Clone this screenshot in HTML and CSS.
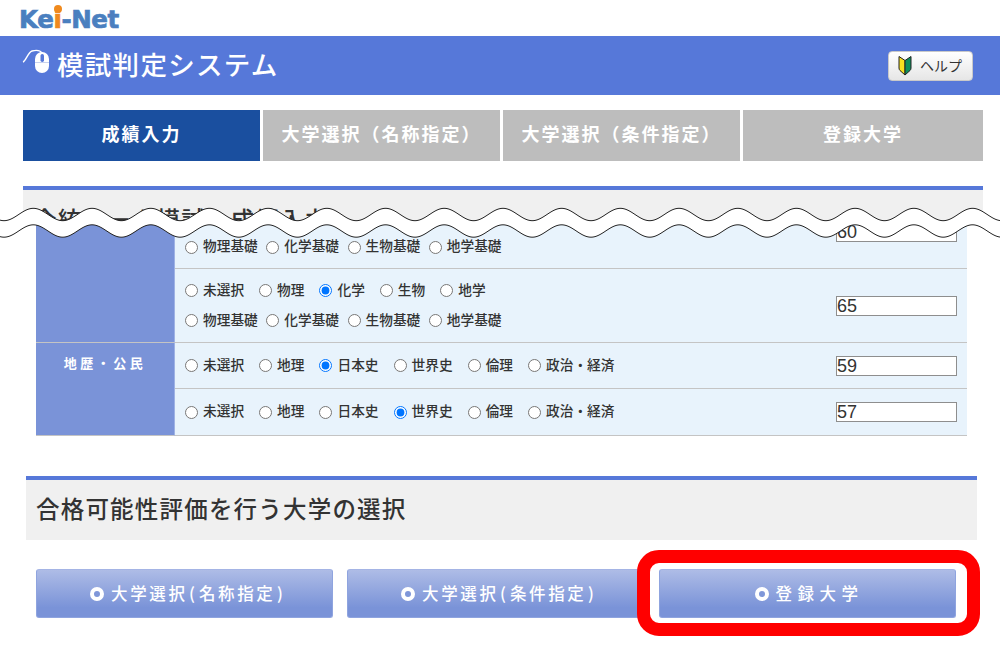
FILE: index.html
```html
<!DOCTYPE html>
<html lang="ja">
<head>
<meta charset="utf-8">
<title>模試判定システム</title>
<link rel="stylesheet" href="styles.css">
</head>
<body>
<div class="page">
  <div class="logo-bar"><span class="logo">Ke<span class="logo-i">i</span>-Net</span></div>
  <header class="band">
    <h1 class="title">
      <svg class="mouse" width="32" height="34" viewBox="0 0 32 34"><path d="M1 16C4 15 6 6 10 5C14 4 18 4 20 7" fill="none" stroke="#fff" stroke-width="1.4"/><rect x="13" y="6" width="14" height="21" rx="7" fill="#fff"/><rect x="18.500" y="8" width="3.500" height="8" rx="1.700" fill="#5678d9"/><path d="M13 16.500H27" stroke="#c9d2ee" stroke-width="1"/></svg>
      <span class="title-text">模試判定システム</span>
    </h1>
    <a class="help">
      <svg width="14" height="21" viewBox="0 0 14 21"><path d="M1 1.500L7 5.500V20L2 15.500Q1 14.500 1 13Z" fill="#f5e020" stroke="#222" stroke-width="1"/><path d="M13 1.500L7 5.500V20L12 15.500Q13 14.500 13 13Z" fill="#0c8f5c" stroke="#222" stroke-width="1"/></svg>
      <span class="help-text">ヘルプ</span>
    </a>
  </header>
  <nav class="tabs">
    <div class="tab active">成績入力</div>
    <div class="tab">大学選択（名称指定）</div>
    <div class="tab">大学選択（条件指定）</div>
    <div class="tab">登録大学</div>
  </nav>
  <h2 class="sec-top">全統マーク模試　成績入力</h2>
  <div class="grid">
    <div class="side side-a"></div>
    <div class="row row-cut">
      <div class="lines">
        <div class="line tight"><label><input type="radio" name="a1">物理基礎</label><label><input type="radio" name="a1">化学基礎</label><label><input type="radio" name="a1">生物基礎</label><label><input type="radio" name="a1">地学基礎</label></div>
      </div>
      <input class="score" type="text" value="60">
    </div>
    <div class="row">
      <div class="lines">
        <div class="line"><label><input type="radio" name="a2">未選択</label><label><input type="radio" name="a2">物理</label><label><input type="radio" name="a2" checked>化学</label><label><input type="radio" name="a2">生物</label><label><input type="radio" name="a2">地学</label></div>
        <div class="line tight"><label><input type="radio" name="a2">物理基礎</label><label><input type="radio" name="a2">化学基礎</label><label><input type="radio" name="a2">生物基礎</label><label><input type="radio" name="a2">地学基礎</label></div>
      </div>
      <input class="score" type="text" value="65">
    </div>
    <div class="side side-b">地歴・公民</div>
    <div class="row">
      <div class="lines">
        <div class="line"><label><input type="radio" name="b1">未選択</label><label><input type="radio" name="b1">地理</label><label><input type="radio" name="b1" checked>日本史</label><label><input type="radio" name="b1">世界史</label><label><input type="radio" name="b1">倫理</label><label><input type="radio" name="b1">政治・経済</label></div>
      </div>
      <input class="score" type="text" value="59">
    </div>
    <div class="row">
      <div class="lines">
        <div class="line"><label><input type="radio" name="b2">未選択</label><label><input type="radio" name="b2">地理</label><label><input type="radio" name="b2">日本史</label><label><input type="radio" name="b2" checked>世界史</label><label><input type="radio" name="b2">倫理</label><label><input type="radio" name="b2">政治・経済</label></div>
      </div>
      <input class="score" type="text" value="57">
    </div>
  </div>
  <h2 class="sec-bottom">合格可能性評価を行う大学の選択</h2>
  <div class="buttons">
    <a class="btn"><i class="ring"></i><span class="btn-text">大学選択<span class="paren">(</span>名称指定<span class="paren">)</span></span></a>
    <a class="btn"><i class="ring"></i><span class="btn-text">大学選択<span class="paren">(</span>条件指定<span class="paren">)</span></span></a>
    <a class="btn wide"><i class="ring"></i><span class="btn-text">登録大学</span></a>
  </div>
  <svg class="tear" width="1000" height="36" viewBox="0 0 1000 36">
    <path id="tearfill" d="" fill="#fff"/>
    <path id="tearu" d="" fill="none" stroke="#222" stroke-width="1"/>
    <path id="tearl" d="" fill="none" stroke="#222" stroke-width="1"/>
  </svg>
  <div class="callout"></div>
</div>
<script src="tear.js"></script>
</body>
</html>
```
FILE: tear.js
```js
(function () {
  var period = 58.7, amp = 6.2, start = 4;
  function wave(mid) {
    var pts = [];
    for (var x = -2; x <= 1002; x += 2) {
      var y = mid + amp * Math.cos(2 * Math.PI * (x - start) / period);
      pts.push(x + ' ' + y.toFixed(2));
    }
    return pts;
  }
  var up = wave(9.5), low = wave(26);
  document.getElementById('tearu').setAttribute('d', 'M' + up.join('L'));
  document.getElementById('tearl').setAttribute('d', 'M' + low.join('L'));
  document.getElementById('tearfill').setAttribute('d', 'M' + up.join('L') + 'L' + low.reverse().join('L') + 'Z');
})();
```
FILE: styles.css
```css
* { box-sizing: border-box; }
html, body { margin: 0; padding: 0; background: #fff; }
body { font-family: "Noto Sans CJK JP", "Liberation Sans", sans-serif; color: #333; overflow: hidden; }
.page { position: relative; width: 1000px; height: 650px; overflow: hidden; }

.logo-bar { height: 36px; padding: 6px 0 0 19px; }
.logo { display: inline-block; font: bold 24.500px/28px "DejaVu Sans", sans-serif; color: #4a7fbf; -webkit-text-stroke: 0.7px #4a7fbf; letter-spacing: -0.4px; }
.logo-i { position: relative; color: #f08a1d; -webkit-text-stroke-color: #f08a1d; }
.logo-i::before { content: ""; position: absolute; left: 0.500px; top: 0; width: 8px; height: 8px; border-radius: 50%; background: #f08a1d; }

.band { height: 59px; background: #5678d9; display: flex; align-items: center; justify-content: space-between; padding: 0 27px 0 22px; }
.title { margin: 0; display: flex; align-items: center; gap: 3px; font-size: 26.500px; font-weight: 500; color: #fff; letter-spacing: 1.300px; line-height: 34px; }
.title-text { margin-top: -4px; }
.mouse { display: block; margin-top: -5px; }
.help { width: 85px; height: 30px; background: linear-gradient(#fff, #e6e6e6); border: 1px solid #c9c9c9; border-radius: 4px; display: flex; align-items: center; gap: 8px; padding-left: 9px; font-size: 14px; color: #333; }
.help-text { margin-top: -2px; }

.tabs { display: flex; gap: 3px; margin: 15px 17px 0 23px; }
.tab { flex: 0 0 237px; height: 51px; padding-bottom: 5px; background: #bdbdbd; color: #fff; display: flex; align-items: center; justify-content: center; font-size: 18px; font-weight: 700; letter-spacing: 2px; }
.tab:last-child { flex: 1; }
.tab.active { background: #1a4f9f; }

.sec-top { margin: 25px 17px 0 23px; height: 36px; border-top: 4px solid #5678d9; background: #f0f0f0; font-size: 23.500px; font-weight: 500; letter-spacing: 1.200px; line-height: 30px; padding: 14px 0 0 10px; white-space: nowrap; overflow: hidden; }

.grid { display: grid; grid-template-columns: 139px 792px; grid-template-rows: 47px 74px 46px 47px; margin-left: 36px; width: 931px; }
.side { background: #7a93d8; border-right: 1px solid #9fb2e4; }
.side-a { grid-column: 1; grid-row: 1 / span 2; border-bottom: 1px solid #c4c4c4; }
.side-b { grid-column: 1; grid-row: 3 / span 2; color: #fff; font-size: 13px; font-weight: 700; letter-spacing: 3.500px; text-align: center; padding-top: 10px; line-height: 20px; border-bottom: 1px solid #c4c4c4; }
.row { grid-column: 2; background: #e8f3fc; border-bottom: 1px solid #c4c4c4; display: flex; align-items: center; justify-content: space-between; padding: 0 10px; }
.row-cut { align-items: flex-start; }
.row-cut .lines { margin-top: 0; padding-top: 13px; }
.lines { display: flex; flex-direction: column; gap: 10px; margin-top: -4px; }
.line { display: flex; gap: 15px; font-size: 13.700px; font-weight: 500; line-height: 20px; white-space: nowrap; color: #333; }
.line.tight { gap: 8.500px; }
.line label { display: flex; align-items: center; gap: 5px; }
.line input { margin: 4px 0 0; width: 13px; height: 13px; flex: none; }
.score { width: 121px; height: 20px; border: 1px solid #8e8e8e; background: #fff; font: 18px/18px "Liberation Sans", sans-serif; color: #333; padding: 1px 0 0; margin: 0; border-radius: 0; }

.sec-bottom { margin: 40px 23px 0 26px; height: 64px; border-top: 4px solid #5678d9; background: #f0f0f0; font-size: 23.500px; font-weight: 500; letter-spacing: 1.200px; line-height: 30px; padding: 13px 0 0 10px; }

.buttons { display: flex; gap: 14px; margin: 29px 0 0 36px; }
.btn { flex: 0 0 297px; height: 49px; padding: 0 0 2px 8px; display: flex; align-items: center; justify-content: center; gap: 7px; border-radius: 3px; background: linear-gradient(#aebce6, #7a93d8 80%); border: 1px solid #8fa4df; border-top-color: #a4b4e5; color: #fff; font-size: 16.500px; font-weight: 500; letter-spacing: 2.600px; }
.btn.wide { letter-spacing: 5.500px; margin-left: 1px; padding-left: 3px; }
.paren { margin: 0 1.500px; }
.ring { width: 14px; height: 14px; border-radius: 50%; background: #7f97d9; border: 4.500px solid #fff; flex: none; margin-top: 2px; }

.tear { position: absolute; left: 0; top: 205px; display: block; }
.callout { position: absolute; left: 637px; top: 550px; width: 343px; height: 86px; border: 13px solid #f00; border-radius: 22px; }
```
